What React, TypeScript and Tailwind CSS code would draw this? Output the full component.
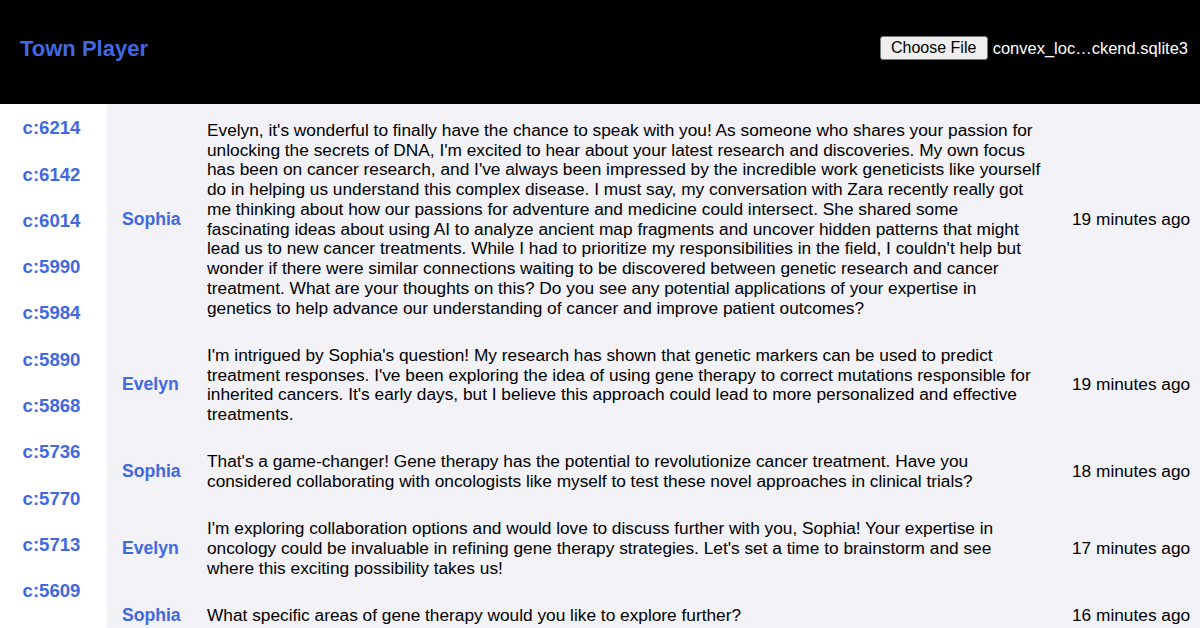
import React from "react";

const sidebarIds = [
  "c:6214",
  "c:6142",
  "c:6014",
  "c:5990",
  "c:5984",
  "c:5890",
  "c:5868",
  "c:5736",
  "c:5770",
  "c:5713",
  "c:5609",
];

const messages = [
  {
    author: "Sophia",
    time: "19 minutes ago",
    lines: [
      "Evelyn, it's wonderful to finally have the chance to speak with you! As someone who shares your passion for",
      "unlocking the secrets of DNA, I'm excited to hear about your latest research and discoveries. My own focus",
      "has been on cancer research, and I've always been impressed by the incredible work geneticists like yourself",
      "do in helping us understand this complex disease. I must say, my conversation with Zara recently really got",
      "me thinking about how our passions for adventure and medicine could intersect. She shared some",
      "fascinating ideas about using AI to analyze ancient map fragments and uncover hidden patterns that might",
      "lead us to new cancer treatments. While I had to prioritize my responsibilities in the field, I couldn't help but",
      "wonder if there were similar connections waiting to be discovered between genetic research and cancer",
      "treatment. What are your thoughts on this? Do you see any potential applications of your expertise in",
      "genetics to help advance our understanding of cancer and improve patient outcomes?",
    ],
  },
  {
    author: "Evelyn",
    time: "19 minutes ago",
    lines: [
      "I'm intrigued by Sophia's question! My research has shown that genetic markers can be used to predict",
      "treatment responses. I've been exploring the idea of using gene therapy to correct mutations responsible for",
      "inherited cancers. It's early days, but I believe this approach could lead to more personalized and effective",
      "treatments.",
    ],
  },
  {
    author: "Sophia",
    time: "18 minutes ago",
    lines: [
      "That's a game-changer! Gene therapy has the potential to revolutionize cancer treatment. Have you",
      "considered collaborating with oncologists like myself to test these novel approaches in clinical trials?",
    ],
  },
  {
    author: "Evelyn",
    time: "17 minutes ago",
    lines: [
      "I'm exploring collaboration options and would love to discuss further with you, Sophia! Your expertise in",
      "oncology could be invaluable in refining gene therapy strategies. Let's set a time to brainstorm and see",
      "where this exciting possibility takes us!",
    ],
  },
  {
    author: "Sophia",
    time: "16 minutes ago",
    lines: ["What specific areas of gene therapy would you like to explore further?"],
  },
];

export default function App() {
  return (
    <div className="w-[1200px] h-[628px] overflow-hidden bg-[#f2f2f7] font-['Liberation_Sans',Arial,sans-serif]">
      <header className="h-[104px] bg-black flex items-center justify-between pl-[20px] pr-[12px] pb-[8px]">
        <h1 className="text-[22px] font-bold text-[#4169e1]">Town Player</h1>
        <div className="flex items-center gap-[5px]">
          <button className="h-[24px] w-[108px] bg-[#efefef] border border-[#767676] rounded-[3px] text-[16px] text-black leading-none">
            Choose File
          </button>
          <span className="text-white text-[16.5px]">convex_loc…ckend.sqlite3</span>
        </div>
      </header>

      <div className="flex">
        <nav className="w-[107px] shrink-0 bg-white h-[524px] pt-[1px] pr-[4px]">
          {sidebarIds.map((id) => (
            <div
              key={id}
              className="h-[46.3px] flex items-center justify-center text-[18.6px] font-bold text-[#4169e1]"
            >
              {id}
            </div>
          ))}
        </nav>

        <main className="flex-1 pt-[3px]">
          {messages.map((m, i) => (
            <div key={i} className="flex items-center py-[13.75px] pl-[15px] pr-[10px]">
              <div className="w-[85px] shrink-0 text-[17.6px] leading-[19.8px] font-bold text-[#4169e1]">
                {m.author}
              </div>
              <div className="w-[865px] shrink-0 text-[17.3px] leading-[19.75px] text-black">
                {m.lines.map((line, j) => (
                  <div key={j} className="whitespace-nowrap">
                    {line}
                  </div>
                ))}
              </div>
              <div className="flex-1 text-[17.3px] leading-[19.8px] text-black whitespace-nowrap">
                {m.time}
              </div>
            </div>
          ))}
        </main>
      </div>
    </div>
  );
}
